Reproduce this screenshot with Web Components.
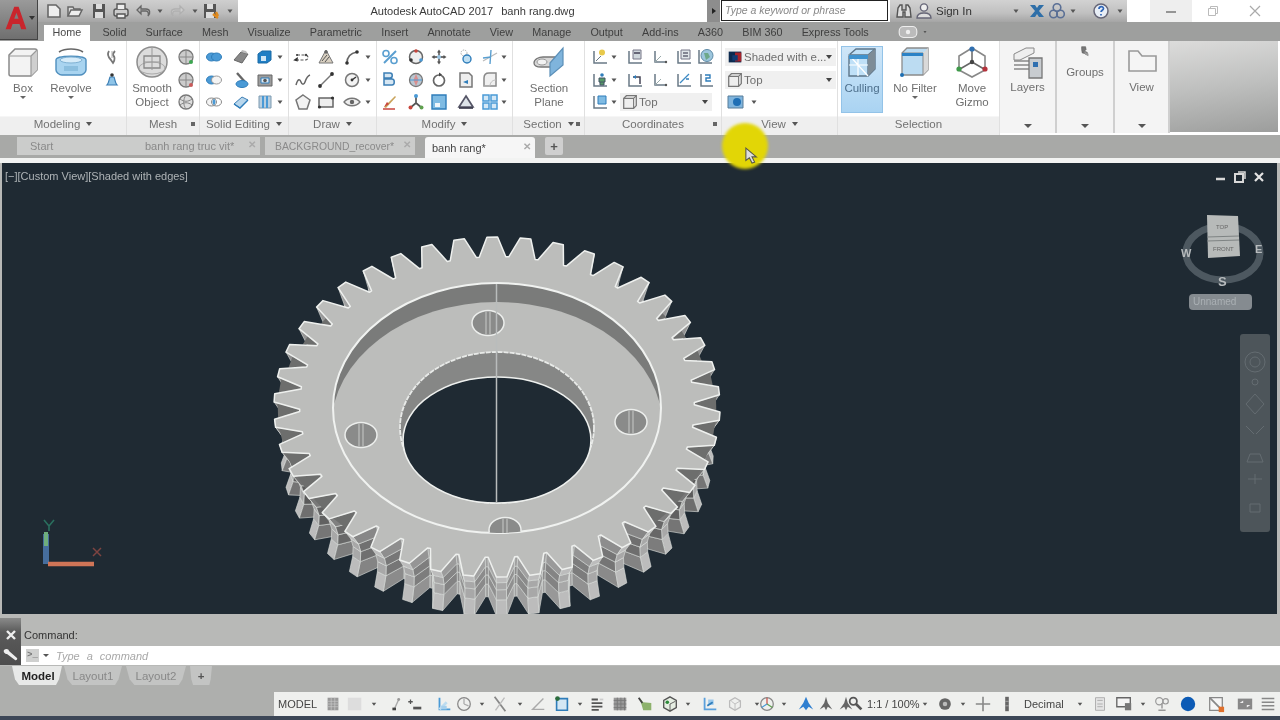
<!DOCTYPE html>
<html>
<head>
<meta charset="utf-8">
<title>AutoCAD 2017</title>
<style>
  html, body { margin: 0; padding: 0; background: #aeafad; overflow: hidden; }
</style>
</head>
<body>
<ac-app>
  <ac-titlebar></ac-titlebar>
  <rb-tabs>
    <rb-tab active>Home</rb-tab><rb-tab>Solid</rb-tab><rb-tab>Surface</rb-tab><rb-tab>Mesh</rb-tab><rb-tab>Visualize</rb-tab><rb-tab>Parametric</rb-tab><rb-tab>Insert</rb-tab><rb-tab>Annotate</rb-tab><rb-tab>View</rb-tab><rb-tab>Manage</rb-tab><rb-tab>Output</rb-tab><rb-tab>Add-ins</rb-tab><rb-tab>A360</rb-tab><rb-tab>BIM 360</rb-tab><rb-tab>Express Tools</rb-tab>
  </rb-tabs>
  <rb-ribbon>
    <rb-panel label="Modeling" arrow style="width:127px">
      <rb-large icon="box" drop style="width:46px">Box</rb-large>
      <rb-large icon="revolve" drop style="width:50px">Revolve</rb-large>
      <rb-stack cols="31" icons="extrude pressbell"></rb-stack>
    </rb-panel>
    <rb-panel label="Mesh" launcher style="width:73px">
      <rb-large icon="sphere" style="width:50px">Smooth<br>Object</rb-large>
      <rb-stack cols="18" icons="meshg meshr meshs"></rb-stack>
    </rb-panel>
    <rb-panel label="Solid Editing" arrow style="width:89px">
      <rb-stack cols="28 26 22 8" icons="union thick bluebox dn subtract cutter imprint dn intersect eraser facets dn"></rb-stack>
    </rb-panel>
    <rb-panel label="Draw" arrow style="width:88px">
      <rb-stack cols="20 26 26 6" start="4" icons="pline hatch arc dn spline line circle dn polygon rect eye dn"></rb-stack>
    </rb-panel>
    <rb-panel label="Modify" arrow style="width:136px">
      <rb-stack cols="26 26 20 34 14 14" icons="percent target move scaleb trim dn copy ball ring doc fillet dn pen triad squareb tri array dn"></rb-stack>
    </rb-panel>
    <rb-panel label="Section" arrow launcher style="width:72px">
      <rb-large icon="section" style="width:72px">Section<br>Plane</rb-large>
    </rb-panel>
    <rb-panel label="Coordinates" launcher style="width:137px">
      <rb-stack cols="22 6 36 14 34 10" start="4" icons="ucsbulb dn ucsbox ucs ucsdoc globe ucsman dn ucsback ucs ucsz ucsz2">
        <ac-icon name="ucsblue"></ac-icon><ac-icon name="dn"></ac-icon>
        <ac-combo icon="viewcube" style="grid-column:3 / -1;width:92px;margin-left:3px;justify-self:start">Top</ac-combo>
      </rb-stack>
    </rb-panel>
    <rb-panel label="View" arrow style="width:116px">
      <rb-stack cols="111" start="3">
        <ac-combo icon="shaded" style="width:111px">Shaded with e...</ac-combo>
        <ac-combo icon="viewcube" style="width:111px">Top</ac-combo>
        <div style="display:flex;align-items:center;justify-self:start;margin-left:1px"><ac-icon name="viewport"></ac-icon><ac-icon name="dn" style="margin-left:-2px"></ac-icon></div>
      </rb-stack>
    </rb-panel>
    <rb-panel label="Selection" style="width:162px">
      <rb-large icon="culling" active style="width:42px;margin-left:3px">Culling</rb-large>
      <rb-large icon="nofilter" drop style="width:64px">No Filter</rb-large>
      <rb-large icon="gizmo" style="width:50px">Move<br>Gizmo</rb-large>
    </rb-panel>
    <rb-slideout icon="layers" style="width:57px">Layers</rb-slideout>
    <rb-slideout icon="groups" short style="width:58px">Groups</rb-slideout>
    <rb-slideout icon="folder" style="width:55px">View</rb-slideout>
    <div style="flex:1;margin:0 2px 3px 0;background:linear-gradient(172deg,#dcdcdb,#bebfbe 50%,#9c9d9c)"></div>
  </rb-ribbon>
  <ac-doctabs>
    <ac-doctab style="width:118px;margin-left:17px;padding-left:13px">Start</ac-doctab>
    <ac-doctab closable style="width:125px;padding-left:10px">banh rang truc vit*</ac-doctab>
    <ac-doctab closable style="width:150px;padding-left:10px;margin-left:5px;font-size:10.4px">BACKGROUND_recover*</ac-doctab>
    <ac-doctab closable active style="width:110px;padding-left:7px;margin-left:10px">banh rang*</ac-doctab>
    <ac-doctab plus style="margin-left:10px">+</ac-doctab>
  </ac-doctabs>
  <ac-viewport></ac-viewport>
  <ac-command></ac-command>
  <ac-layouts>
    <ac-layouttab active style="width:50px;margin-left:-2px;padding-left:2px">Model</ac-layouttab>
    <ac-layouttab style="width:58px;margin-left:2px">Layout1</ac-layouttab>
    <ac-layouttab style="width:60px;margin-left:4px">Layout2</ac-layouttab>
    <ac-layouttab style="width:22px;margin-left:4px;color:#555;font-weight:bold">+</ac-layouttab>
  </ac-layouts>
  <ac-status></ac-status>
  <ac-cursor></ac-cursor>
</ac-app>

<script>
(function () {
'use strict';

var BL = '#4a9ad6', LB = '#bfdff3', RD = '#c8453c', GN = '#5fa04e';

// small icons, 20 unit box
var small = {
    dn: '<path d="M7.5 8.5h5L10 12z" fill="#555"/>',
    qnew: '<path d="M4 4h8l4 4v8H4z" fill="#eee" stroke="#666" stroke-width="1.6"/>',
    qopen: '<path d="M3 15V6h5l1 2h6v2" fill="#ddd" stroke="#666" stroke-width="1.5"/><path d="M3 15l3-6h11l-3 6z" fill="#eee" stroke="#666" stroke-width="1.5"/>',
    qsave: '<path d="M4 3h12v14H4z" fill="#555"/><path d="M7 3h6v5H7zM6 11h8v6H6z" fill="#ddd"/>',
    qprint: '<rect x="3" y="8" width="14" height="7" rx="2" fill="#ccc" stroke="#555" stroke-width="1.4"/><path d="M6 8V3h8v5M6 13h8v4H6z" fill="#eee" stroke="#555" stroke-width="1.4"/>',
    undo: '<path d="M7 5L3 9l4 4V10h5c2 0 3 2 2 5 3-3 2-7-2-7H7z" fill="#bbb" stroke="#666" stroke-width="1.3"/>',
    redo: '<path d="M13 5l4 4-4 4V10H8c-2 0-3 2-2 5-3-3-2-7 2-7h5z" fill="#ccc" stroke="#b0b0b0" stroke-width="1.3"/>',
    qsaveas: '<path d="M3 3h12v14H3z" fill="#555"/><path d="M6 3h6v5H6zM5 11h8v6H5z" fill="#ddd"/><path d="M12 13l5 4M15 11l2 4" stroke="#e08a1e" stroke-width="2.4"/>',
    binoc: '<path d="M3 16l1-9 2-3h2v5h4V4h2l2 3 1 9h-6v-5H9v5z" fill="#ddd" stroke="#555" stroke-width="1.4"/>',
    user: '<circle cx="10" cy="6.5" r="3.6" fill="#eee" stroke="#667" stroke-width="1.4"/><path d="M3 17c0-4 3-5 7-5s7 1 7 5z" fill="#ddd" stroke="#667" stroke-width="1.4"/>',
    xchg: '<path d="M3 4l5 6-5 6h5l2-3 2 3h5l-5-6 5-6h-5l-2 3-2-3z" fill="#2f6fa8"/>',
    tri3: '<circle cx="10" cy="6.5" r="3.8" fill="none" stroke="#5a6f95" stroke-width="1.6"/><circle cx="6.5" cy="13" r="3.8" fill="none" stroke="#5a6f95" stroke-width="1.6"/><circle cx="13.5" cy="13" r="3.8" fill="none" stroke="#5a6f95" stroke-width="1.6"/>',
    help: '<circle cx="10" cy="10" r="7" fill="#e8eef6" stroke="#667" stroke-width="1.5"/><path d="M8 8c0-3 4.500-3 4.500-.5 0 1.500-2.500 2-2.500 3.500M10 13v1.500" fill="none" stroke="#2f66b8" stroke-width="1.7"/>',
    extrude: '<path d="M7 4c-2 3-1 6 2 9l2 3c2-3 2-6 0-8 0-2 1-3 2-4" fill="none" stroke="#777" stroke-width="1.8"/><path d="M10 4v7" stroke="#aaa"/>',
    pressbell: '<path d="M5 15c2-2 2-6 3-8h4c1 2 1 6 3 8z" fill="#8ec4e8" stroke="#3d7fb5" stroke-width="1.2"/><circle cx="10" cy="5" r="1.800" fill="#333"/>',
    meshg: '<circle cx="10" cy="10" r="7" fill="#ccc" stroke="#777" stroke-width="1.300"/><path d="M4 10h12M10 3v14" stroke="#888"/><circle cx="15" cy="15" r="2" fill="#3ca650"/>',
    meshr: '<circle cx="10" cy="10" r="7" fill="#ccc" stroke="#777" stroke-width="1.300"/><path d="M4 10h12M10 3v14" stroke="#888"/><circle cx="15" cy="15" r="2" fill="#c85a5a"/>',
    meshs: '<circle cx="10" cy="10" r="7" fill="#ddd" stroke="#777" stroke-width="1.300"/><path d="M4 7c4 3 8 3 12 0M4 13c4-3 8-3 12 0M10 3c-3 4-3 10 0 14" fill="none" stroke="#888"/>',
    union: '<ellipse cx="7.500" cy="10" rx="5" ry="4" fill="' + BL + '" stroke="#2f7dba"/><ellipse cx="12.500" cy="10" rx="5" ry="4" fill="' + BL + '" stroke="#2f7dba"/>',
    thick: '<path d="M3 13l7-8 7 2-6 9z" fill="#888" stroke="#666"/><path d="M10 5l7 2-2-3-4-1z" fill="#bbb"/>',
    bluebox: '<path d="M3 7l4-3h9v9l-4 3H3z" fill="#1f7ec4" stroke="#1b6aa5"/><path d="M6 9h5v5H6z" fill="#cfe6f6"/>',
    subtract: '<ellipse cx="7.500" cy="10" rx="5" ry="4" fill="' + BL + '" stroke="#2f7dba"/><ellipse cx="12.500" cy="10" rx="5" ry="4" fill="#f4f4f4" stroke="#999"/>',
    cutter: '<path d="M6 3l8 9" stroke="#666" stroke-width="2.400"/><ellipse cx="11" cy="14" rx="6" ry="3.500" fill="' + BL + '" stroke="#2f7dba"/>',
    imprint: '<path d="M3 5h14v11H3z" fill="#9c9c9c" stroke="#666"/><path d="M6 8h8v5H6z" fill="#dfeaf3" stroke="#2f7dba"/><circle cx="10" cy="10.500" r="1.800" fill="#555"/>',
    intersect: '<ellipse cx="7.500" cy="10" rx="5" ry="4" fill="#f4f4f4" stroke="#888"/><ellipse cx="12.500" cy="10" rx="5" ry="4" fill="none" stroke="#888"/><path d="M10 6.800c2 2 2 4.400 0 6.400-2-2-2-4.400 0-6.400z" fill="' + BL + '"/>',
    eraser: '<path d="M3 12l8-7 6 3-8 8z" fill="#b8d6ec" stroke="#3d7fb5"/><path d="M3 12l6 4 8-8" fill="none" stroke="#2f7dba" stroke-width="1.400"/>',
    facets: '<path d="M4 4h12v12H4z" fill="#b9cfe0" stroke="#7d9ab0"/><path d="M8 4v12M12 4v12" stroke="' + BL + '" stroke-width="2"/>',
    pline: '<path d="M4 8h8c4 0 4 5 0 5H5" fill="none" stroke="#555" stroke-width="1.200" stroke-dasharray="3 1.500"/><path d="M4 13.500l-2-.5 2-1.500zM3 8h2" stroke="#333" stroke-width="1.600"/><circle cx="13" cy="8" r="1.200" fill="#444"/>',
    hatch: '<path d="M10 3l7 13H3z" fill="#d8cfc0" stroke="#777"/><path d="M6 14l5-6M9 15l4-5" stroke="#555"/><circle cx="10" cy="5" r="1.800" fill="#666"/>',
    arc: '<path d="M5 16c0-6 4-10 10-11" fill="none" stroke="#666" stroke-width="1.700"/><circle cx="5" cy="16" r="1.800" fill="#333"/><circle cx="15" cy="5" r="1.800" fill="#333"/>',
    spline: '<path d="M3 15c2-7 4-6 5-3s3 3 4 0 2-6 5-7" fill="none" stroke="#666" stroke-width="1.500"/>',
    line: '<path d="M4 16L16 4" stroke="#777" stroke-width="1.500"/><circle cx="4" cy="16" r="1.900" fill="#333"/><circle cx="16" cy="4" r="1.900" fill="#333"/>',
    circle: '<circle cx="10" cy="10" r="6.500" fill="#f3f3f3" stroke="#777" stroke-width="1.500"/><path d="M10 10l4-3" stroke="#333" stroke-width="1.400"/><circle cx="10" cy="10" r="1.400" fill="#333"/>',
    polygon: '<path d="M10 3l7 5-3 9H6L3 8z" fill="#f2f2f2" stroke="#777" stroke-width="1.500"/>',
    rect: '<path d="M3 6h14v9H3z" fill="#eee" stroke="#666" stroke-width="1.500"/><circle cx="3.500" cy="15" r="1.600" fill="#333"/><circle cx="16.500" cy="6" r="1.600" fill="#333"/>',
    eye: '<path d="M2 10c4-5 12-5 16 0-4 5-12 5-16 0z" fill="#eee" stroke="#777" stroke-width="1.300"/><circle cx="10" cy="10" r="2.200" fill="#666"/>',
    percent: '<path d="M4 16L16 4" stroke="#5a9fd0" stroke-width="2"/><circle cx="6" cy="6.500" r="3" fill="none" stroke="#5a9fd0" stroke-width="1.600"/><circle cx="14" cy="13.500" r="3" fill="none" stroke="#5a9fd0" stroke-width="1.600"/>',
    target: '<circle cx="10" cy="10" r="6.500" fill="#eee" stroke="#666" stroke-width="1.500"/><circle cx="10" cy="4" r="1.800" fill="' + RD + '"/><circle cx="5" cy="13" r="1.800" fill="#333"/><circle cx="15" cy="13" r="1.800" fill="' + BL + '"/>',
    move: '<path d="M10 2.500l2 3h-4zM10 17.500l-2-3h4zM2.500 10l3-2v4zM17.500 10l-3 2V8z" fill="#555"/><path d="M10 5v10M5 10h10" stroke="#444" stroke-width="1.400"/><circle cx="10" cy="10" r="2" fill="#99c4e3"/>',
    scaleb: '<circle cx="8" cy="6" r="3" fill="none" stroke="#aaa" stroke-dasharray="1.500 1"/><circle cx="11" cy="12" r="4" fill="' + LB + '" stroke="#2f7dba" stroke-width="1.400"/>',
    trim: '<path d="M3 14l14-8" stroke="#bbb" stroke-width="1.300"/><path d="M3 11l8-1M11 3l-1 14" stroke="#5a9fd0" stroke-width="1.400"/>',
    copy: '<path d="M4 3h6c3 0 3 5 0 5H4zM4 9h8c3 0 3 6 0 6H4z" fill="#d7e7f3" stroke="#3d7fb5" stroke-width="1.500"/>',
    ball: '<circle cx="10" cy="10" r="6.500" fill="#b9c6d1" stroke="#777" stroke-width="1.300"/><path d="M10 4l2.500 6-2.500 6-2.500-6z" fill="#d98f8f"/><path d="M4 10h12" stroke="' + BL + '"/>',
    ring: '<circle cx="10" cy="10.500" r="5.500" fill="none" stroke="#666" stroke-width="1.700"/><path d="M10 2.500l3 2-3 2z" fill="#444"/>',
    doc: '<path d="M4 3h9l3 3v11H4z" fill="#eee" stroke="#777" stroke-width="1.500"/><path d="M7 12l5-2v4z" fill="#2f7dba"/>',
    fillet: '<path d="M4 16V8c0-3 2-5 5-5h7v13z" fill="#f0f0f0" stroke="#888" stroke-width="1.500"/><path d="M4 16h6c0-3 2-6 6-6" fill="none" stroke="#bbb"/>',
    pen: '<path d="M4 15L15 4l1 1L6 16z" fill="#c9a35b"/><path d="M4 15l3-5 2 2z" fill="' + RD + '"/><path d="M3 17h12" stroke="' + RD + '" stroke-width="1.500"/>',
    triad: '<path d="M10 3v8l-6 5M10 11l6 5" stroke="#555" stroke-width="1.700" fill="none"/><circle cx="10" cy="4" r="2" fill="' + BL + '"/><circle cx="4.500" cy="15.500" r="2" fill="' + RD + '"/><circle cx="15.500" cy="15.500" r="2" fill="' + GN + '"/>',
    squareb: '<path d="M3 3h14v14H3z" fill="#7fbbe3" stroke="#2f7dba" stroke-width="1.400"/><path d="M6 11h5v4H6z" fill="#f0f6fb"/>',
    tri: '<path d="M10 4l7 11H3z" fill="#dde3e8" stroke="#556" stroke-width="1.700"/><path d="M3 16h14" stroke="#334" stroke-width="1.600"/>',
    array: '<path d="M3 3h6v6H3zM11 3h6v6h-6zM3 11h6v6H3zM11 11h6v6h-6z" fill="#d4e8f6" stroke="#4a9ad6" stroke-width="1.500"/>',
    ucsbulb: '<path d="M4 4v12h13" fill="none" stroke="#6a7a86" stroke-width="1.500"/><path d="M6 14l5-5" stroke="#6a7a86"/><circle cx="12" cy="5.500" r="3" fill="#e8c94a"/>',
    ucsbox: '<path d="M4 4v12h13" fill="none" stroke="#6a7a86" stroke-width="1.500"/><path d="M8 3h8v9H8z" fill="#cfd7dc" stroke="#778"/><path d="M9 6h6" stroke="#667" stroke-width="2"/>',
    ucs: '<path d="M5 4v11h11" fill="none" stroke="#6a7a86" stroke-width="1.500"/><path d="M5 15l6-6" stroke="#9aa"/><circle cx="16" cy="15" r="1.200" fill="#555"/>',
    ucsdoc: '<path d="M4 4v12h13" fill="none" stroke="#6a7a86" stroke-width="1.500"/><path d="M7 3h9v9H7z" fill="#dfe5e9" stroke="#778"/><path d="M9 6h5M9 9h5" stroke="#667" stroke-width="1.400"/>',
    globe: '<path d="M3 3v13h13" fill="none" stroke="#6a7a86" stroke-width="1.500"/><circle cx="11" cy="8.500" r="6" fill="#9dc6dd" stroke="#5d8aa6"/><path d="M8 6l4 0 2 4-4 3z" fill="#6ea889"/>',
    ucsman: '<path d="M4 4v12h13" fill="none" stroke="#6a7a86" stroke-width="1.500"/><circle cx="12" cy="5" r="1.800" fill="#2f7dba"/><path d="M9 8h6v4H9zM10 12v3h4v-3" fill="#596" stroke="#456"/>',
    ucsback: '<path d="M4 4v12h13" fill="none" stroke="#6a7a86" stroke-width="1.500"/><path d="M8 7h7v7" fill="none" stroke="#445" stroke-width="1.500"/><path d="M8 7l3-2v4z" fill="#2f7dba"/>',
    ucsz: '<path d="M4 4v12h13" fill="none" stroke="#6a7a86" stroke-width="1.500"/><path d="M6 13l9-9" stroke="#3d8ac4" stroke-width="1.300"/><path d="M12 9h3" stroke="#2f7dba" stroke-width="1.500"/>',
    ucsz2: '<path d="M5 4v12h12" fill="none" stroke="#6a7a86" stroke-width="1.500"/><path d="M9 5h5v3h-4v3h5" fill="none" stroke="#2f7dba" stroke-width="1.400"/>',
    ucsblue: '<path d="M4 4v12h13" fill="none" stroke="#6a7a86" stroke-width="1.500"/><path d="M8 4h8v8H8z" fill="#7fbbe3" stroke="#2f7dba"/>',
    viewcube: '<path d="M3 6l3-3h11v11l-3 3H3z" fill="#eee" stroke="#777" stroke-width="1.400"/><path d="M3 6h11v11M14 6l3-3" fill="none" stroke="#777" stroke-width="1.200"/>',
    shaded: '<path d="M3 4h14v12H3z" fill="#0c2a4f"/><path d="M10 5h7v10h-7z" fill="#a6232a"/><path d="M7 8h6v6H7z" fill="#123b73"/>',
    viewport: '<path d="M2 4h15v12H2z" fill="#7fb4dd" stroke="#587d99"/><circle cx="11" cy="10" r="4" fill="#1f6fb5"/>',
    // status bar
    sgrid: '<path d="M4 3h12v14H4z" fill="#999"/><path d="M4 7h12M4 10h12M4 13h12M8 3v14M12 3v14" stroke="#ccc" stroke-width=".7"/>',
    sblank: '<path d="M2 3h15v14H2z" fill="#ddd"/>',
    ssnap: '<path d="M8 16l5-11" stroke="#aaa" stroke-width="1.500"/><path d="M6 14h4v3H6z" fill="#444"/><circle cx="13" cy="5" r="1.600" fill="#999"/>',
    stick: '<path d="M8 13h9v3H8z" fill="#555"/><path d="M5 5v5M2.500 7.500h5" stroke="#555" stroke-width="1.400"/>',
    sortho: '<path d="M5 3v13h12" fill="none" stroke="#4a9ad6" stroke-width="2"/><path d="M5 16l8-8" stroke="#bcdcf0" stroke-width="3"/><path d="M7 12h6v4H7z" fill="#a5cfec"/>',
    spolar: '<circle cx="10" cy="10" r="7" fill="none" stroke="#888" stroke-width="1.400"/><path d="M10 10V4M10 10l5 2" stroke="#aaa" stroke-width="1.400"/>',
    sxsnap: '<path d="M4 2l12 16" stroke="#888" stroke-width="2"/><path d="M15 3L5 17" stroke="#bbb" stroke-width="1.500"/>',
    sangle: '<path d="M16 4L4 16h13" fill="none" stroke="#aaa" stroke-width="1.500"/>',
    sblue: '<path d="M4 4h12v13H4z" fill="#d4e7f4" stroke="#2f7dba" stroke-width="1.800"/><circle cx="5" cy="4" r="2.600" fill="#2c6d3c"/>',
    slines: '<path d="M4 4h7v2H4zM4 8h12v2H4zM4 12h12v2H4zM4 15.500h8v2H4z" fill="#555"/><path d="M13 4h4v2h-4z" fill="#ccc"/>',
    sdots: '<path d="M3 3h14v14H3z" fill="#999"/><path d="M3 6h14M3 10h14M3 14h14M7 3v14M11 3v14M15 3v14" stroke="#777" stroke-width="1"/>',
    sgreen: '<path d="M4 3l4 5 9 1v8H8z" fill="#8db26c"/><path d="M3 3l4 6" stroke="#444" stroke-width="2"/>',
    scube: '<path d="M10 2l7 4v8l-7 4-7-4V6z" fill="#e6eee3" stroke="#555" stroke-width="1.500"/><circle cx="7" cy="8" r="2" fill="#2d8a3a"/><path d="M10 10l6-3M10 10v7" stroke="#555"/>',
    sfig: '<path d="M4 3v13h13" fill="none" stroke="#5aa0dc" stroke-width="2"/><path d="M8 5h6v6H8z" fill="#9ac8ec"/><path d="M7 12l6-4" stroke="#2f7dba" stroke-width="2"/>',
    scubeg: '<path d="M10 3l6 3.500v7L10 17l-6-3.500v-7z" fill="none" stroke="#bbb" stroke-width="1.400"/><path d="M10 10l6-3.500M10 10v7M10 10L6 7" stroke="#bbb"/>',
    swheel: '<circle cx="10" cy="10" r="7" fill="none" stroke="#888" stroke-width="1.400"/><path d="M10 10V3" stroke="' + RD + '" stroke-width="1.300"/><path d="M10 10l6 4" stroke="' + GN + '" stroke-width="1.300"/><path d="M10 10l-6 4" stroke="' + BL + '" stroke-width="1.300"/>',
    sman: '<path d="M10 2l3 7 5 7-5-3-3 4-3-4-5 3 5-7z" fill="#2f7fd0"/>',
    sman2: '<path d="M10 2l2 7 5 7-5-3-2 4-2-4-5 3 5-7z" fill="#666"/>',
    smag: '<circle cx="7" cy="7" r="4" fill="none" stroke="#555" stroke-width="2"/><path d="M10 10l6 6" stroke="#555" stroke-width="3"/>',
    sgear: '<circle cx="10" cy="10" r="6.500" fill="#666"/><circle cx="10" cy="10" r="2.500" fill="#bbb"/>',
    splus: '<path d="M10 2v16M2 10h16" stroke="#888" stroke-width="1.800"/>',
    sbar: '<path d="M8 2h4v16H8z" fill="#666"/><path d="M8 7h4M8 12h4" stroke="#aaa"/>',
    scalc: '<path d="M5 3h10v14H5z" fill="#e4e4e4" stroke="#aaa"/><path d="M7 6h6M7 10h6M7 13h6" stroke="#aaa"/>',
    smon: '<path d="M2 3h15v10H2z" fill="#f4f4f4" stroke="#666" stroke-width="1.500"/><path d="M11 9h7v8h-7z" fill="#777"/>',
    sclean: '<circle cx="7" cy="7" r="4" fill="none" stroke="#999" stroke-width="1.300"/><circle cx="14" cy="7" r="3" fill="none" stroke="#999" stroke-width="1.300"/><path d="M10 9v6M6 17h8" stroke="#999" stroke-width="1.600"/>',
    sdot: '<circle cx="10" cy="10" r="8" fill="#0c5bb5"/>',
    sisol: '<path d="M3 3h14v14H3z" fill="#f6f6f6" stroke="#888" stroke-width="1.400"/><path d="M3 3l14 14" stroke="#888" stroke-width="2"/><path d="M13 13h6v6h-6z" fill="#e0702c"/>',
    sfull: '<path d="M2 4h16v12H2z" fill="#888"/><path d="M4 9l4-3v3zM16 11l-4 3v-3z" fill="#eee"/>',
    smenu: '<path d="M3 4h14M3 8h14M3 12h14M3 16h14" stroke="#888" stroke-width="1.700"/>',
    eyetab: '<rect x="2" y="5" width="16" height="10" rx="4" fill="#bbb" stroke="#eee"/><circle cx="10" cy="10" r="2" fill="#eee"/>'
};

// large icons, 32 unit box
var large = {
    box: '<path d="M2 9l6-6h20c1 0 2 1 2 2v19l-6 6H4c-1 0-2-1-2-2z" fill="#f3f3f3" stroke="#8a8a8a" stroke-width="1.500"/><path d="M24 10l6-6v20l-6 6z" fill="#cfcfcf"/><path d="M2 10h22v20M24 10l6-6" fill="none" stroke="#9a9a9a" stroke-width="1.200"/>',
    revolve: '<path d="M4 6c6-4 18-4 24 0" fill="none" stroke="#666" stroke-width="1.600"/><path d="M1 14c0-5 30-5 30 0v10c0 3-4 5-6 5H7c-3 0-6-3-6-5z" fill="#a9d4f0" stroke="#4f8fbe" stroke-width="1.400"/><ellipse cx="16" cy="14" rx="11" ry="3" fill="#d7ecf9" stroke="#7fb1d3"/><path d="M9 20h14v5H9z" fill="#8cbfdf"/>',
    sphere: '<circle cx="16" cy="16" r="15" fill="#dcdcdc" stroke="#8c8c8c" stroke-width="1.500"/><ellipse cx="16" cy="22" rx="13" ry="6" fill="none" stroke="#aaa"/><path d="M8 10h16v12H8z" fill="none" stroke="#888" stroke-width="1.300"/><path d="M16 2v22M8 16h16" stroke="#999"/>',
    section: '<path d="M1 17c0-4 5-6 9-6h12v10H8c-4 0-7-1-7-4z" fill="#d8d8d8" stroke="#777" stroke-width="1.300"/><ellipse cx="9" cy="16" rx="5" ry="3" fill="#f2f2f2" stroke="#999"/><path d="M17 17L30 2v17L17 30z" fill="#7fb4dc" stroke="#5b8fb8" stroke-width="1.200"/>',
    culling: '<path d="M3 9l7-6h19v20l-7 7H3z" fill="#bfe0f7" stroke="#5c7488" stroke-width="1.400"/><path d="M3 9h19v21M22 9l7-6" fill="none" stroke="#5c7488" stroke-width="1.400"/><path d="M22 9l7-6v20l-7 7z" fill="#7d8c97"/><path d="M3 19h19M12 9v21M3 9l19 21" stroke="#fff" stroke-width="1.200" fill="none"/><path d="M3 9h19v4H3z" fill="#3f93cf"/>',
    nofilter: '<path d="M3 7l5-5h21v22l-5 5H3z" fill="#bcdcf2" stroke="#8b8b8b" stroke-width="1.300"/><path d="M24 7l5-5v22l-5 5z" fill="#d9d9d9"/><path d="M3 7h21v22" fill="none" stroke="#8b8b8b"/><path d="M3 7h21v3H3z" fill="#2b82c6"/><circle cx="3" cy="29" r="2" fill="#1d6fb4"/>',
    gizmo: '<path d="M16 2l13 8v14l-13 7-13-7V10z" fill="none" stroke="#888" stroke-width="1.600"/><path d="M16 16L16 4M16 16L4 23M16 16l12 7" stroke="#666" stroke-width="1.500"/><circle cx="16" cy="3" r="2.600" fill="#2f6fb0"/><circle cx="16" cy="16" r="2.200" fill="#444"/><circle cx="29" cy="23" r="2.600" fill="#b5333d"/><circle cx="3" cy="23" r="2.600" fill="#3f9a4a"/>',
    layers: '<path d="M2 7l12-6h8v5L8 13H2z" fill="#eee" stroke="#888"/><path d="M2 14h16M2 18h16M2 22h16" stroke="#888" stroke-width="1.500"/><path d="M17 11h13v20H17z" fill="#c8ccd0" stroke="#777" stroke-width="1.300"/><path d="M21 15h5v5h-5z" fill="#2f6fb0"/>',
    groups: '<path d="M10 3h7l1 5-3 3 5 2 1 5-6-3-4-1-1-6z" fill="#777" stroke="#555"/><path d="M15 12l7 3 0 5-6-3z" fill="#999"/>',
    folder: '<path d="M3 4h9l4 5h14v15H3z" fill="#f5f5f5" stroke="#999" stroke-width="1.600"/>'
};

function register(tag, css, html, init) {
    var template = document.createElement('template');
    template.innerHTML = '<style>' + css + '</style>' + html;
    customElements.define(tag, class extends HTMLElement {
        constructor() {
            super();
            this.attachShadow({ mode: 'open' }).appendChild(document.importNode(template.content, true));
        }
        connectedCallback() {
            if (init && !this._done) {
                this._done = true;
                init.call(this, this.shadowRoot);
            }
        }
    });
}

function iconSvg(name, size) {
    var big = large[name];
    var box = big ? 32 : 20;
    return '<svg width="' + size + '" height="' + size + '" viewBox="0 0 ' + box + ' ' + box + '">' + (big || small[name] || '') + '</svg>';
}

register('ac-icon', ':host{display:inline-flex;align-items:center;justify-content:center}svg{display:block;flex:none}', '', function (root) {
    var size = this.getAttribute('size') || (large[this.getAttribute('name')] ? 32 : 20);
    root.innerHTML += iconSvg(this.getAttribute('name'), size);
});

register('ac-app',
    ':host{display:flex;flex-direction:column;position:relative;width:1280px;height:720px;overflow:hidden;background:#aeafad;color:#555;font:11.5px "Liberation Sans",Arial,sans-serif;filter:blur(.6px)}',
    '<slot></slot>');

register('ac-titlebar', `
    :host{display:flex;height:22px;background:#fff;position:relative;flex:none}
    .logo{position:absolute;left:0;top:0;width:38px;height:40px;background:linear-gradient(#9a9a9a,#6f6f6f);border:1px solid #444;border-width:0 1px 1px 0;z-index:2;box-sizing:border-box}
    .logo svg{position:absolute;left:4px;top:5px}
    .logo i{position:absolute;left:29px;top:16px;border:3px solid transparent;border-top:4px solid #333}
    .band{display:flex;align-items:center;background:linear-gradient(#cfcfcf,#bcbcbc 60%,#a5a5a5);height:22px}
    .qat{margin-left:38px;width:200px;padding-left:6px;box-sizing:border-box}
    .title{flex:1;display:flex;justify-content:center;gap:8px;align-items:center;color:#3a3a3a;font-size:11.1px;padding-right:0}
    .btn{width:13px;height:22px;background:#8d8d8d;display:flex;align-items:center;justify-content:center;margin-right:1px}
    .btn i{border:3px solid transparent;border-left:4px solid #222;margin-left:4px}
    .search{width:167px;height:21px;box-sizing:border-box;border:1px solid #222;background:#fff;color:#888;font-style:italic;font-size:10.5px;line-height:19px;padding-left:3px}
    .right{margin-left:2px;width:237px;padding-left:3px;box-sizing:border-box;background:linear-gradient(#d2d2d2,#c0c0c0 60%,#a5a5a5)}
    .signin{color:#333;width:72px;font-size:11.5px}
    .win{display:flex;margin:0 4px 0 23px}
    .win div{width:42px;height:22px;display:flex;align-items:center;justify-content:center;color:#999}
    .win div:first-child{background:#eee}
  `, `
    <div class="logo"><svg width="24" height="26" viewBox="0 0 26 30"><path d="M1 28L11 2h5l9 26h-6l-2-6H9l-2 6z" fill="#c9252c"/><path d="M11 16h5l-2.500-7z" fill="#7d7d7d"/></svg><i></i></div>
    <div class="band qat" id="qat"></div>
    <div class="title"><span>Autodesk AutoCAD 2017</span><span>banh rang.dwg</span></div>
    <div class="btn"><i></i></div>
    <div class="search">Type a keyword or phrase</div>
    <div class="band right" id="right"></div>
    <div class="win">
      <div><svg width="12" height="12"><path d="M1 7h10" stroke="#777" stroke-width="1.500"/></svg></div>
      <div><svg width="12" height="12"><path d="M1.500 3.500h7v7h-7zM3.500 3V1.500h7v7H9" fill="none" stroke="#bbb"/></svg></div>
      <div><svg width="12" height="12"><path d="M1 1l10 10M11 1L1 11" stroke="#aaa" stroke-width="1.200"/></svg></div>
    </div>
  `, function (root) {
        var qat = [[12, 'qnew'], [30, 'qopen'], [18, 'qsave'], [26, 'qprint'], [20, 'undo'], [12, 'dn'], [22, 'redo'], [14, 'dn'], [18, 'qsaveas'], [20, 'dn']];
        root.getElementById('qat').innerHTML = qat.map(function (q, i) {
            return '<ac-icon name="' + q[1] + '" style="flex:none;width:' + q[0] + 'px;margin-left:' + (i ? 0 : 4) + 'px"></ac-icon>';
        }).join('');
        root.getElementById('right').innerHTML =
            '<ac-icon name="binoc" style="width:20px;margin-left:1px"></ac-icon><ac-icon name="user" style="width:20px"></ac-icon>' +
            '<span class="signin" style="margin-left:2px">Sign In</span><ac-icon name="dn" style="width:20px;margin-left:9px"></ac-icon>' +
            '<ac-icon name="xchg" style="width:21px;margin-left:1px"></ac-icon><ac-icon name="tri3" style="width:22px"></ac-icon>' +
            '<ac-icon name="dn" style="width:12px"></ac-icon><ac-icon name="help" style="width:20px;margin-left:12px"></ac-icon><ac-icon name="dn" style="width:14px;margin-left:2px"></ac-icon>';
    });

register('rb-tabs', `
    :host{display:flex;height:19px;background:#9e9f9e;padding-left:44px;flex:none;align-items:stretch;font-size:10.8px}
    .eye{margin-left:19px;display:flex;align-items:center}
  `, '<slot></slot><div class="eye"><ac-icon name="eyetab" size="22"></ac-icon><ac-icon name="dn"  size="12"></ac-icon></div>');

register('rb-tab', `
    :host{display:flex;align-items:center;padding:0 9.6px;color:#3f3f3f;white-space:nowrap}
    :host([active]){background:#fff;margin-top:3px;padding:0 8.5px;margin-right:3px;color:#4a4a4a;align-items:flex-start;line-height:14px}
  `, '<slot></slot>');

register('rb-ribbon', ':host{display:flex;height:94px;background:#fff;flex:none;border-bottom:0}', '<slot></slot>');

register('rb-panel', `
    :host{display:flex;flex-direction:column;box-sizing:border-box;flex:none;border-right:1px solid #e0e0e0}
    .body{display:flex;height:75px;box-sizing:border-box;padding-top:5px;background:#fff}
    .label{height:19px;padding-bottom:4px;background:#efefef;border-top:1px solid #f6f6f6;box-sizing:border-box;display:flex;align-items:center;justify-content:center;color:#727272;position:relative}
    .label i{border:3px solid transparent;border-top:4px solid #555;margin:3px 0 0 6px;display:none}
    .label b{position:absolute;right:4px;top:5px;width:4px;height:4px;background:#666;display:none}
  `, '<div class="body"><slot></slot></div><div class="label"><span id="t"></span><i></i><b></b></div>', function (root) {
        root.getElementById('t').textContent = this.getAttribute('label');
        if (this.hasAttribute('arrow')) root.querySelector('i').style.display = 'block';
        if (this.hasAttribute('launcher')) root.querySelector('b').style.display = 'block';
    });

register('rb-large', `
    :host{display:flex;flex-direction:column;align-items:center;height:67px;box-sizing:border-box;line-height:14px;text-align:center;color:#6f6f6f;flex:none;position:relative}
    :host([active]){background:linear-gradient(#cfe6f8,#a9d3f2);box-shadow:inset 0 0 0 1px #93c3e8;color:#4d6f8c}
    .pic{height:35px;display:flex;align-items:flex-start;justify-content:center}
    .dn{border:3px solid transparent;border-top:3px solid #666;margin-top:1px}
  `, '<div class="pic" id="p"></div><div><slot></slot></div><i class="dn" id="d"></i>', function (root) {
        root.getElementById('p').innerHTML = '<ac-icon name="' + this.getAttribute('icon') + '"></ac-icon>';
        if (!this.hasAttribute('drop')) root.getElementById('d').style.display = 'none';
    });

register('rb-stack', `
    :host{display:block;flex:none}
    .g{display:grid;grid-auto-rows:22.5px;justify-items:center;align-items:center}
    ::slotted(*){justify-self:center}
    slot{display:contents}
  `, '<div class="g" id="g"></div>', function (root) {
        var g = root.getElementById('g');
        g.style.gridTemplateColumns = this.getAttribute('cols').split(' ').map(function (c) { return c + 'px'; }).join(' ');
        if (this.hasAttribute('start')) g.style.marginLeft = this.getAttribute('start') + 'px';
        g.innerHTML = (this.getAttribute('icons') || '').split(' ').filter(Boolean).map(function (n) {
            return '<ac-icon name="' + n + '"></ac-icon>';
        }).join('') + '<slot></slot>';
    });

register('ac-combo', `
    :host{display:flex;align-items:center;height:18px;background:#f0f0f0;color:#6f6f6f;box-sizing:border-box;padding:0 1px;white-space:nowrap;position:relative}
    i{position:absolute;right:4px;top:7px;border:3px solid transparent;border-top:4px solid #444}
  `, '<span id="p"></span><span><slot></slot></span><i></i>', function (root) {
        var p = root.getElementById('p');
        p.style.display = 'flex';
        p.innerHTML = '<ac-icon name="' + this.getAttribute('icon') + '" size="18"></ac-icon>';
    });

register('rb-slideout', `
    :host{display:flex;flex-direction:column;align-items:center;height:92px;background:#f4f4f4;border-right:2px solid #cfcfcf;box-sizing:border-box;flex:none;color:#6f6f6f;padding-top:4px;position:relative}
    .pic{height:34px;display:flex;align-items:flex-start}
    i{position:absolute;bottom:5px;left:50%;margin-left:-4px;border:4px solid transparent;border-top:4px solid #555;border-bottom:0}
  `, '<div class="pic" id="p"></div><slot></slot><i></i>', function (root) {
        var short = this.hasAttribute('short');
        var p = root.getElementById('p');
        p.innerHTML = '<ac-icon name="' + this.getAttribute('icon') + '" size="' + (short ? 18 : 32) + '"></ac-icon>';
        if (short) p.style.height = '21px';
        else p.style.paddingTop = '2px';
    });

register('ac-doctabs', ':host{display:flex;height:23px;background:#a8a9a7;border-bottom:5px solid #f2f3f2;flex:none;align-items:flex-end;padding-bottom:0}', '<slot></slot>');

register('ac-doctab', `
    :host{display:flex;align-items:center;height:18px;margin-bottom:3px;background:#cbcccb;color:#8a8a8a;box-sizing:border-box;position:relative;white-space:nowrap;font-size:11px}
    :host([active]){background:#f6f6f6;color:#444;height:21px;margin-bottom:0;border-radius:3px 3px 0 0}
    :host([plus]){background:#cfcfcf;width:18px;justify-content:center;color:#555;font-weight:bold;font-size:13px;border-radius:2px}
    b{position:absolute;right:4px;top:50%;margin-top:-7px;font:bold 10px "Liberation Sans",sans-serif;color:#aaa;display:none}
  `, '<slot></slot><b>✕</b>', function (root) {
        if (this.hasAttribute('closable')) root.querySelector('b').style.display = 'block';
    });

register('ac-viewport', `
    :host{display:block;height:451px;flex:none;background:#1f2a33;position:relative;overflow:hidden;border:solid #b7b8b6;border-width:0 3px 0 2px;box-sizing:border-box}
    svg{position:absolute;left:-2px;top:0;overflow:visible}
    .lbl{position:absolute;left:3px;top:7px;color:#aeb3b6;font-size:11px}
    .ctl{left:1212px;top:7px}
    .ucs{left:36px;top:355px}
    .nav{left:1183px;top:50px}
    .pill{position:absolute;left:1187px;top:131px;width:63px;height:16px;border-radius:4px;background:#858b90;color:#aab0b4;font-size:10px;line-height:16px;padding-left:4px;box-sizing:border-box}
    .bar{position:absolute;left:1238px;top:171px;width:30px;height:198px;border-radius:3px;background:#4d555a}
    .bar svg{left:0}
  `, `
    <svg id="gear" width="1280" height="451" viewBox="0 163 1280 451"></svg>
    <div class="lbl">[−][Custom View][Shaded with edges]</div>
    <svg class="ctl" width="56" height="14" viewBox="0 0 56 14">
      <path d="M2 9h9" stroke="#d8d8d8" stroke-width="2.500"/>
      <path d="M21 4h8v8h-8z" fill="none" stroke="#d8d8d8" stroke-width="2"/><path d="M24 2h7v7" fill="none" stroke="#d8d8d8" stroke-width="1.500"/>
      <path d="M41 3l8 8M49 3l-8 8" stroke="#e4e4e4" stroke-width="2.200"/>
    </svg>
    <svg class="ucs" width="70" height="60" viewBox="0 0 70 60">
      <path d="M8 16v30" stroke="#466e9e" stroke-width="6"/><path d="M8 14v14" stroke="#6fae7c" stroke-width="4"/>
      <path d="M10 46h46" stroke="#d07557" stroke-width="4.500"/>
      <path d="M55 30l8 8M63 30l-8 8" stroke="#7e4441" stroke-width="1.500"/>
      <path d="M6 2l5 6 5-6M11 8v5" stroke="#2a6f5e" fill="none" stroke-width="1.600"/>
    </svg>
    <svg class="nav" width="80" height="90" viewBox="0 0 80 90">
      <ellipse cx="38" cy="40" rx="37" ry="27" fill="none" stroke="#4d5860" stroke-width="7"/>
      <path d="M22 2l31 1 2 40-32 2z" fill="#b7bab9"/><path d="M22 24l32-1M22 28l32-1" stroke="#7e8383"/>
      <text x="31" y="16" font-size="6" fill="#666" font-family="Liberation Sans">TOP</text>
      <text x="28" y="38" font-size="6" fill="#666" font-family="Liberation Sans">FRONT</text>
      <text x="-4" y="44" font-size="11" font-weight="bold" fill="#b8bcbe" font-family="Liberation Sans">W</text>
      <text x="70" y="40" font-size="11" font-weight="bold" fill="#b8bcbe" font-family="Liberation Sans">E</text>
      <text x="33" y="73" font-size="13" font-weight="bold" fill="#b8bcbe" font-family="Liberation Sans">S</text>
    </svg>
    <div class="pill">Unnamed</div>
    <div class="bar">
      <svg width="30" height="198" viewBox="0 0 30 198" fill="none" stroke="#646c71">
        <circle cx="15" cy="28" r="10"/><circle cx="15" cy="28" r="5"/><circle cx="15" cy="48" r="3"/>
        <path d="M15 60l9 10-9 10-9-10zM6 92l8 8M24 92l-8 8M10 120h10l3 8H7zM8 145h14M15 140v10M10 170h10v8H10z"/>
      </svg>
    </div>
  `, function (root) {
        root.getElementById('gear').innerHTML = drawGear();
    });

function drawGear() {
    var cx = 497, cy = 407, rx = 223, ry = 170, n = 42, phase = -Math.PI / 2 - 0.09;
    var depth = 44;
    function layer(t) {
        var pts = [];
        var shrink = 1 - 0.03 * t;
        var waist = 0.04 * Math.sin(Math.PI * t);
        for (var k = 0; k < n; k++) {
            var f = [[0.0, 0.885], [0.3, 1], [0.62, 1], [0.9, 0.885]];
            for (var j = 0; j < f.length; j++) {
                var a = phase + (k + f[j][0]) * 2 * Math.PI / n;
                var tip = f[j][1] === 1 ? waist : waist * 0.3;
                var r = (f[j][1] - tip) * shrink;
                pts.push([cx + rx * r * Math.cos(a), cy + depth * t + ry * r * Math.sin(a)]);
            }
        }
        return pts;
    }
    function poly(p) {
        return p.map(function (q) { return q[0].toFixed(1) + ' ' + q[1].toFixed(1); }).join(' ');
    }
    function lerp(a, b, w) {
        return [a[0] + (b[0] - a[0]) * w, a[1] + (b[1] - a[1]) * w];
    }
    var out = '';
    var steps = [1, 0.72, 0.5, 0.28, 0];
    var front = layer(0);
    for (var s = 0; s < steps.length - 1; s++) {
        var back = layer(steps[s]), near = layer(steps[s + 1]);
        var quads = [];
        for (var i = 0; i < back.length; i++) {
            var i2 = (i + 1) % back.length;
            var dx = near[i2][0] - near[i][0], dy = near[i2][1] - near[i][1];
            var len = Math.hypot(dx, dy) || 1;
            var nx = dy / len, ny = -dx / len;   // outward normal, the points run clockwise on screen
            if (ny < -0.02) continue;
            var kind = i % 4, shade;
            if (kind === 1) shade = 178;
            else if (kind === 3) shade = 150;
            else shade = 100 + Math.round(60 * Math.abs(nx));
            shade += (s === 1 || s === 2) ? -10 : 10;
            quads.push({ y: (near[i][1] + near[i2][1]) / 2, d: poly([near[i], near[i2], back[i2], back[i]]), c: shade });
        }
        quads.sort(function (a, b) { return a.y - b.y; });
        out += quads.map(function (q) {
            return '<polygon points="' + q.d + '" fill="rgb(' + q.c + ',' + q.c + ',' + q.c + ')" stroke="#dfe2df" stroke-width=".6"/>';
        }).join('');
    }
    // dark wedges in the tooth gaps along both flanks
    for (var g = 0; g < n; g++) {
        var tipA = front[g * 4 + 2], rootA = front[g * 4 + 3];
        var tipB = front[((g + 1) % n) * 4 + 1], rootB = front[((g + 1) % n) * 4];
        var root = lerp(rootA, rootB, 0.5);
        var sinA = (root[1] - cy) / (ry * 0.885);
        if (sinA < -0.62 || sinA > 0.72) continue;
        var w = Math.min(0.86, 0.3 + (sinA + 0.62) * 1.1);
        out += '<polygon points="' + poly([root, lerp(root, tipA, w), lerp(root, tipB, w)]) + '" fill="#6d6e6d"/>';
    }
    out += '<polygon points="' + poly(front) + '" fill="#bcbdbb" stroke="#eef0ee" stroke-width="1.500" stroke-linejoin="round"/>';

    // recessed ring
    out += '<clipPath id="rc"><ellipse cx="497" cy="408" rx="164" ry="125"/></clipPath>';
    out += '<ellipse cx="497" cy="408" rx="164" ry="125" fill="#7a7b7a"/>';
    out += '<ellipse cx="497" cy="428" rx="166" ry="126" fill="#bcbdbb" clip-path="url(#rc)"/>';
    out += '<ellipse cx="497" cy="408" rx="164" ry="125" fill="none" stroke="#f0f2f0" stroke-width="2"/>';
    // bolt holes
    [[488, 323], [361, 435], [631, 422], [505, 530]].forEach(function (h, idx) {
        out += '<g ' + (idx === 3 ? 'clip-path="url(#rc)"' : '') + '><ellipse cx="' + h[0] + '" cy="' + h[1] + '" rx="16" ry="12.500" fill="#8a8b8a" stroke="#eceeec" stroke-width="1.500"/>' +
            '<path d="M' + (h[0] - 2) + ' ' + (h[1] - 11) + 'v22M' + (h[0] + 2) + ' ' + (h[1] - 11) + 'v22" stroke="#c8cac8" stroke-width="1"/></g>';
    });
    // hub and bore
    out += '<ellipse cx="497" cy="427.500" rx="97" ry="75.500" fill="#868786" stroke="#e8eae8" stroke-width="1.800" stroke-dasharray="5 1"/>';
    out += '<ellipse cx="497" cy="440" rx="94" ry="63" fill="#1f2a33" stroke="#eef0ee" stroke-width="1.600"/>';
    out += '<path d="M496.500 284v219" stroke="#b9bcbc" stroke-width="1.500"/>';
    return out;
}

register('ac-command', `
    :host{display:flex;height:52px;background:#b8b9b7;flex:none;position:relative}
    .side{width:21px;margin-top:4px;height:47px;background:linear-gradient(#8a8b8a,#5a5a5a 30%,#4d4d4d);display:flex;flex-direction:column;align-items:center;justify-content:flex-end;gap:5px;padding-bottom:2px;box-sizing:border-box;flex:none}
    .main{flex:1;display:flex;flex-direction:column;justify-content:flex-end;padding-bottom:1px}
    .out{padding:0 0 5px 3px;color:#333;font-size:11px}
    .in{height:19px;background:#fff;display:flex;align-items:center;padding-left:5px;color:#a8a8a8;font-style:italic;font-size:11px;word-spacing:4px}
    .chev{width:13px;height:13px;background:#cfd0cf;color:#777;font:bold 9px/13px "Liberation Mono",monospace;text-align:center;font-style:normal}
    .tri{border:3px solid transparent;border-top:3px solid #555;margin:3px 7px 0 4px}
  `, `
    <div class="side">
      <svg width="14" height="14"><path d="M3 3l8 8M11 3l-8 8" stroke="#eee" stroke-width="2.400"/></svg>
      <svg width="16" height="16"><path d="M1 3c2-2 5-1 5 1l8 7c1 1-1 3-2 2L4 7C2 7 0 5 1 3z" fill="#eee"/></svg>
    </div>
    <div class="main">
      <div class="out">Command:</div>
      <div class="in"><span class="chev">&gt;_</span><i class="tri"></i><span>Type a command</span></div>
    </div>
  `);

register('ac-layouts', ':host{display:flex;height:22px;background:#aeafad;padding-left:14px;flex:none;align-items:flex-start}', '<slot></slot>');

register('ac-layouttab', `
    :host{display:flex;height:19px;align-items:center;justify-content:center;background:#c3c4c3;color:#888;box-sizing:border-box;clip-path:polygon(0 0,100% 0,94% 70%,88% 100%,14% 100%,6% 70%)}
    :host([active]){background:#e8e9e8;color:#222;font-weight:bold}
  `, '<slot></slot>');

register('ac-status', `
    :host{display:flex;height:32px;flex:none;flex-direction:column;background:#aeafad}
    .row{flex:1;display:flex;align-items:center;margin:4px 0 0 274px;background:#eff0ee;color:#444;white-space:nowrap}
    .foot{height:4px;background:#3d4757}
    .t{font-size:11px;color:#444;position:relative}
  `, '<div class="row" id="r"></div><div class="foot"></div>', function (root) {
        // [centre x, icon name] and [centre x, text, width]
        var items = [[297, 'MODEL', 38], [333, 'sgrid'], [355, 'sblank'], [374, 'dn'], [396, 'ssnap'], [415, 'stick'], [444, 'sortho'], [464, 'spolar'], [482, 'dn'],
            [500, 'sxsnap'], [520, 'dn'], [538, 'sangle'], [562, 'sblue'], [580, 'dn'], [597, 'slines'], [620, 'sdots'], [645, 'sgreen'], [670, 'scube'], [688, 'dn'],
            [710, 'sfig'], [735, 'scubeg'], [757, 'dn'], [767, 'swheel'], [784, 'dn'], [806, 'sman'], [826, 'sman2'], [846, 'sman2'], [856, 'smag'],
            [893, '1:1 / 100%', 52], [925, 'dn'], [945, 'sgear'], [963, 'dn'], [983, 'splus'], [1007, 'sbar'], [1045, 'Decimal', 42], [1080, 'dn'], [1100, 'scalc'],
            [1124, 'smon'], [1143, 'dn'], [1162, 'sclean'], [1188, 'sdot'], [1216, 'sisol'], [1245, 'sfull'], [1268, 'smenu']];
        var x = 274, html = '';
        items.forEach(function (it) {
            var w = it[2] || 18;
            var left = it[0] - w / 2 - x;
            x = it[0] + w / 2;
            html += it[2]
                ? '<span class="t" style="flex:none;width:' + w + 'px;margin-left:' + left + 'px">' + it[1] + '</span>'
                : '<ac-icon name="' + it[1] + '" size="18" style="flex:none;margin-left:' + left + 'px"></ac-icon>';
        });
        root.getElementById('r').innerHTML = html;
    });

register('ac-cursor', `
    :host{position:absolute;left:722px;top:123px;width:46px;height:46px;display:block}
    .glow{position:absolute;inset:0;border-radius:50%;background:#e2d606;filter:blur(1.500px)}
    svg{position:absolute;left:23px;top:24px}
  `, '<div class="glow"></div><svg width="14" height="18" viewBox="0 0 16 20"><path d="M1 1v14l4-3 3 6 3-1-3-6h5z" fill="#ddd" stroke="#554" stroke-width="1.200"/></svg>');

}());
</script>
</body>
</html>
